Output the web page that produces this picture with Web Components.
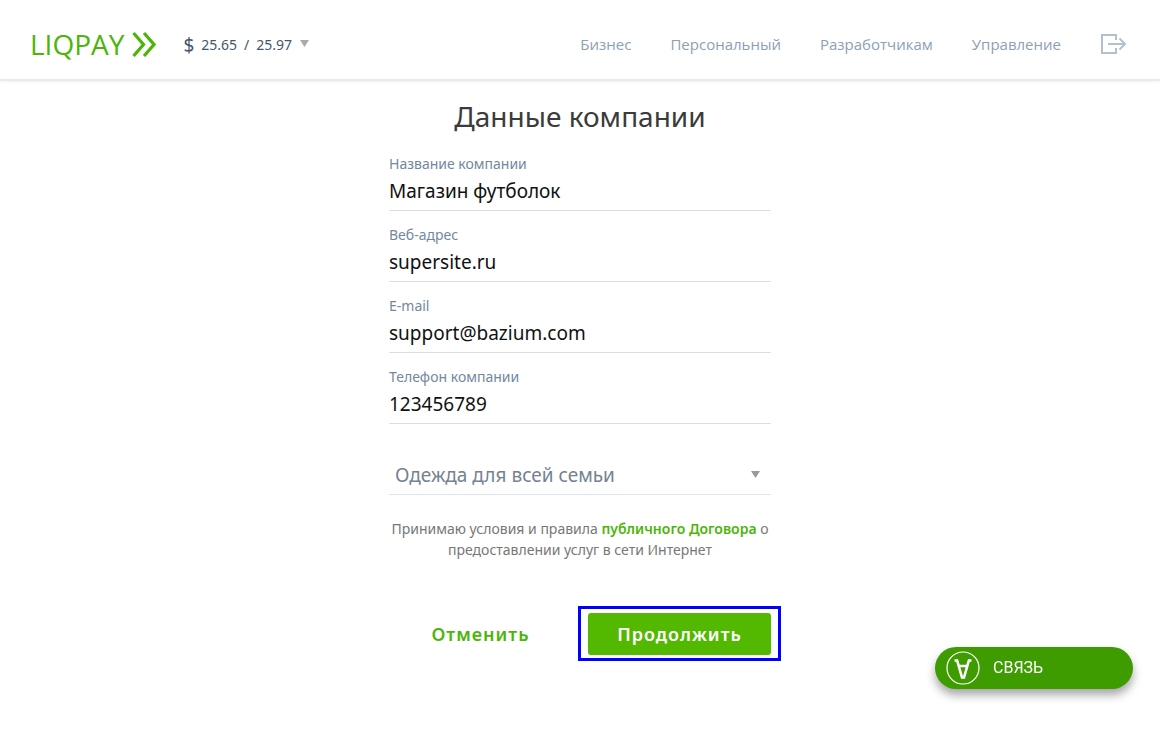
<!DOCTYPE html>
<html lang="ru">
<head>
<meta charset="utf-8">
<meta name="viewport" content="width=device-width, initial-scale=1">
<title>LiqPay — Данные компании</title>
<style>
  body { margin: 0; min-height: 100vh; background: #fff; color: #333; font-family: "Noto Sans", "Open Sans", sans-serif; }
</style>
</head>
<body>
<liq-header>
  <liq-rates slot="rates" buy="25.65" sell="25.97"></liq-rates>
  <liq-nav-link>Бизнес</liq-nav-link>
  <liq-nav-link>Персональный</liq-nav-link>
  <liq-nav-link>Разработчикам</liq-nav-link>
  <liq-nav-link>Управление</liq-nav-link>
</liq-header>
<liq-company-form heading="Данные компании">
  <liq-field label="Название компании" value="Магазин футболок"></liq-field>
  <liq-field label="Веб-адрес" value="supersite.ru"></liq-field>
  <liq-field label="E-mail" type="email" value="support@bazium.com"></liq-field>
  <liq-field label="Телефон компании" type="tel" value="123456789"></liq-field>
  <liq-select label="Категория" value="Одежда для всей семьи"></liq-select>
  <liq-terms></liq-terms>
  <liq-button slot="actions">Отменить</liq-button>
  <liq-button slot="actions" primary>Продолжить</liq-button>
</liq-company-form>
<liq-contact>СВЯЗЬ</liq-contact>

<script>
class LiqElement extends HTMLElement {
  constructor() {
    super();
    this.attachShadow({ mode: 'open' }).innerHTML = this.render();
  }
  attr(name, fallback = '') { return this.getAttribute(name) || fallback; }
}

customElements.define('liq-header', class extends LiqElement {
  render() {
    return `<style>
      :host { display: block; }
      header { display: flex; align-items: center; height: 79px; padding: 0 33px 0 30px;
        border-bottom: 2px solid #e9e9e9; box-shadow: 0 1px 2px rgba(0,0,0,.06); }
      .logo { display: flex; align-items: center; gap: 8px; color: #4db50a; text-decoration: none;
        font: 28px/32px "Open Sans", sans-serif; padding-top: 8px; margin-right: 27px; }
      nav { display: flex; align-items: center; gap: 39px; margin-left: auto; padding-top: 9px; }
      .exit { display: flex; }
      svg { display: block; }
    </style>
    <header>
      <a class="logo" href="#"><span>LIQPAY</span><svg width="24" height="26" viewBox="0 0 24 26" fill="none" stroke="#4db50a" stroke-width="3.200"><path d="M1.500 2 11.500 13.500 1.500 25M12 2 22 13.500 12 25"/></svg></a>
      <slot name="rates"></slot>
      <nav><slot></slot>
        <a class="exit" href="#" aria-label="Выход"><svg width="27" height="22" viewBox="0 0 27 22" fill="none" stroke="#b3c0cd" stroke-width="2"><path d="M16 7V2H2V20H16V15M8 11H25M19.500 5.500 25 11 19.500 16.500"/></svg></a>
      </nav>
    </header>`;
  }
});

customElements.define('liq-rates', class extends LiqElement {
  render() {
    return `<style>
      :host { display: block; padding-top: 10px; }
      button { display: flex; align-items: center; gap: 7px; border: 0; padding: 0; background: none;
        color: #44566c; font: 14px/20px "Noto Sans", sans-serif; cursor: pointer; }
      .sign { font-size: 19px; }
      svg { display: block; margin: 0 0 2px 1px; }
    </style>
    <button type="button"><span class="sign">$</span><span>${this.attr('buy')}</span><span>/</span><span>${this.attr('sell')}</span><svg width="9" height="7"><path d="M0 0H9L4.500 7z" fill="#aaa"/></svg></button>`;
  }
});

customElements.define('liq-nav-link', class extends LiqElement {
  render() {
    return `<style>
      :host { display: block; }
      a { display: block; color: #8c9fb4; text-decoration: none; font: 15px/20px "Open Sans", sans-serif; }
    </style><a href="#"><slot></slot></a>`;
  }
});

customElements.define('liq-company-form', class extends LiqElement {
  render() {
    return `<style>
      :host { display: block; }
      form { width: 382px; max-width: 100%; margin: 0 auto; padding: 15px 0 48px; }
      h1 { margin: 0 0 18px; text-align: center; font-size: 28px; line-height: 40px; font-weight: 400; color: #3b3b3b; }
      .actions { display: flex; justify-content: space-between; margin-top: 53px; }
    </style>
    <form><h1>${this.attr('heading')}</h1><slot></slot><div class="actions"><slot name="actions"></slot></div></form>`;
  }
});

customElements.define('liq-field', class extends LiqElement {
  render() {
    return `<style>
      :host { display: block; height: 57px; margin-bottom: 14px; }
      label { display: block; color: #7388a0; font-size: 14px; line-height: 20px; }
      input { display: block; box-sizing: border-box; width: 100%; height: 37px; border: 0; border-bottom: 1px solid #d8dfe5;
        padding: 0 0 2px; outline: 0; background: none; color: #111; font: 19px/26px "Noto Sans", sans-serif; }
    </style>
    <label for="control">${this.attr('label')}</label>
    <input id="control" type="${this.attr('type', 'text')}" value="${this.attr('value')}">`;
  }
});

customElements.define('liq-select', class extends LiqElement {
  render() {
    return `<style>
      :host { display: grid; align-items: center; padding-top: 20px; }
      select, svg { grid-area: 1 / 1; }
      select { appearance: none; width: 100%; height: 37px; border: 0; border-bottom: 1px solid #dfe4e9; border-radius: 0;
        padding: 0 30px 2px 6px; outline: 0; background: none; color: #748292; font: 19px/26px "Noto Sans", sans-serif; }
      svg { justify-self: end; margin: 0 11px 4px 0; pointer-events: none; }
    </style>
    <select aria-label="${this.attr('label')}"><option>${this.attr('value')}</option></select>
    <svg width="9" height="7"><path d="M0 0H9L4.500 7z" fill="#999"/></svg>`;
  }
});

customElements.define('liq-terms', class extends LiqElement {
  render() {
    return `<style>
      :host { display: block; }
      p { margin: 23px 0 0; text-align: center; color: #777; font-size: 14px; line-height: 21px; }
      a { color: #4db50a; font-weight: 600; text-decoration: none; }
    </style>
    <p>Принимаю условия и правила <a href="#">публичного Договора</a> о<br>предоставлении услуг в сети Интернет</p>`;
  }
});

customElements.define('liq-button', class extends LiqElement {
  render() {
    return `<style>
      :host { display: block; position: relative; width: 183px; }
      :host([primary])::after { content: ""; position: absolute; inset: -7px -10px -6px; border: 3px solid #00f; pointer-events: none; }
      button { display: block; width: 100%; height: 42px; border: 0; border-radius: 3px; padding: 0; background: none;
        color: #4db50a; font: 600 18px/24px "Noto Sans", sans-serif; letter-spacing: 1px; cursor: pointer; }
      :host([primary]) button { background: #53b800; color: #fff; }
    </style><button type="button"><slot></slot></button>`;
  }
});

customElements.define('liq-contact', class extends LiqElement {
  render() {
    return `<style>
      :host { display: block; position: fixed; right: 27px; bottom: 41px; }
      button { display: flex; align-items: center; gap: 13px; width: 198px; height: 42px; border: 0; border-radius: 21px; padding: 0 0 0 11px;
        background: #3f9c00; color: #fff; font: 16px/20px Roboto, sans-serif; box-shadow: 0 6px 10px rgba(0,0,0,.35); cursor: pointer; }
      svg { display: block; }
    </style>
    <button type="button"><svg width="34" height="34" viewBox="0 0 34 34" fill="none" stroke="#fff"><circle cx="17" cy="17" r="16" stroke-width="1.200"/><path d="M8.500 9.500H12M22 9.500H25.500M11 9 16 26.500H18L23 9M13 15H21" stroke-width="2.600"/></svg><slot></slot></button>`;
  }
});
</script>
</body>
</html>
